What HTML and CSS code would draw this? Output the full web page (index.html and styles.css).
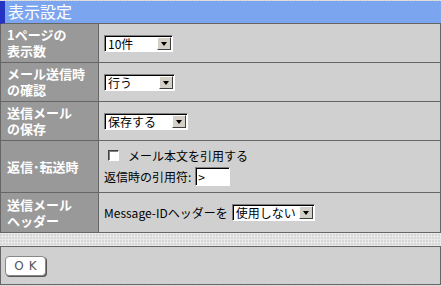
FILE: index.html
```html
<!DOCTYPE html>
<html lang="ja">
<head>
    <meta charset="UTF-8">
    <title>表示設定</title>
    <link rel="stylesheet" href="styles.css">
</head>
<body>
    <div class="panel">
        <div class="panel-title">表示設定</div>
        <div class="settings">
            <div class="label">1ページの<br>表示数</div>
            <div class="value">
                <span class="combo combo-count"><span class="combo-text">10件</span><span class="combo-arrow"></span></span>
            </div>

            <div class="label">メール送信時<br>の確認</div>
            <div class="value">
                <span class="combo combo-confirm"><span class="combo-text">行う</span><span class="combo-arrow"></span></span>
            </div>

            <div class="label">送信メール<br>の保存</div>
            <div class="value">
                <span class="combo combo-save"><span class="combo-text">保存する</span><span class="combo-arrow"></span></span>
            </div>

            <div class="label">返信･転送時</div>
            <div class="value value-stack">
                <label class="check-line"><span class="checkbox"></span>メール本文を引用する</label>
                <div class="quote-line">返信時の引用符:<span class="text-box">&gt;</span></div>
            </div>

            <div class="label">送信メール<br>ヘッダー</div>
            <div class="value">
                Message-IDヘッダーを<span class="combo combo-header"><span class="combo-text">使用しない</span><span class="combo-arrow"></span></span>
            </div>
        </div>
    </div>

    <div class="actions">
        <button class="btn-ok">OK</button>
    </div>
</body>
</html>
```

FILE: styles.css
```css
* {
    margin: 0;
    padding: 0;
    box-sizing: border-box;
    font-family: "Noto Sans CJK JP", "DejaVu Sans", sans-serif;
}

body {
    width: 441px;
    background-color: #e9e9e9;
    background-image: radial-gradient(circle at 1px 1px, #d6d6d6 0.7px, transparent 0.9px);
    background-size: 3px 3px;
    font-size: 12px;
}

.panel {
    padding-top: 1px;
}

.panel-title {
    height: 23px;
    padding-left: 3px;
    background-color: #7ba6ef;
    border-left: 5px solid #2433c2;
    border-bottom: 1px solid #666;
    color: white;
    font-size: 16px;
    line-height: 21px;
}

.settings {
    display: grid;
    grid-template-columns: 97px 1fr;
    grid-template-rows: 38px 38px 38px 51px 39px;
    gap: 1px;
    background-color: #666;
    border: 1px solid #666;
    border-top: none;
}

.label {
    display: flex;
    align-items: center;
    padding-left: 6px;
    background-color: #999;
    color: white;
    font-size: 13px;
    font-weight: bold;
    line-height: 16px;
}

.value {
    display: flex;
    align-items: center;
    padding-left: 5px;
    background-color: #d0d0d0;
    color: #000;
}

.value-stack {
    flex-direction: column;
    align-items: flex-start;
    justify-content: center;
}

.combo {
    display: inline-flex;
    align-items: center;
    height: 17px;
    background-color: white;
    border: 1px solid;
    border-color: #808080 #fff #fff #808080;
    box-shadow: inset 1px 1px #000;
}

.combo-count { width: 69px; }
.combo-confirm { width: 71px; }
.combo-save { width: 84px; }
.combo-header { width: 83px; margin-left: 4px; }

.combo-text {
    flex: 1;
    padding-left: 3px;
    line-height: 15px;
    white-space: nowrap;
    overflow: hidden;
}

.combo-arrow {
    position: relative;
    width: 14px;
    height: 13px;
    margin-right: 1px;
    background-color: #d4d0c8;
    border: 1px solid;
    border-color: #fff #404040 #404040 #fff;
}

.combo-arrow::after {
    content: "";
    position: absolute;
    left: 3px;
    top: 4px;
    border-left: 3.5px solid transparent;
    border-right: 3.5px solid transparent;
    border-top: 4px solid #000;
}

.check-line {
    display: flex;
    align-items: center;
    height: 16px;
}

.checkbox {
    width: 11px;
    height: 11px;
    margin: 0 9px 0 4px;
    background-color: white;
    border: 1px solid;
    border-color: #404040 #fff #fff #404040;
    box-shadow: inset 1px 1px #808080;
}

.quote-line {
    display: flex;
    align-items: center;
    margin-top: 3px;
}

.text-box {
    width: 35px;
    height: 19px;
    margin-left: 4px;
    padding-left: 2px;
    background-color: white;
    border: 1px solid;
    border-color: #808080 #fff #fff #808080;
    box-shadow: inset 1px 1px #000;
    line-height: 17px;
}

.actions {
    display: flex;
    align-items: center;
    height: 39px;
    margin-top: 13px;
    padding-left: 4px;
    background-color: #d0d0d0;
    border: 1px solid #666;
}

.btn-ok {
    width: 41px;
    height: 20px;
    padding-left: 5px;
    background-color: white;
    border: 1px solid #888;
    border-radius: 4px;
    box-shadow: 1px 1px #555;
    color: #555;
    font-family: "DejaVu Sans", sans-serif;
    font-size: 12px;
    letter-spacing: 5px;
    cursor: pointer;
}
```
